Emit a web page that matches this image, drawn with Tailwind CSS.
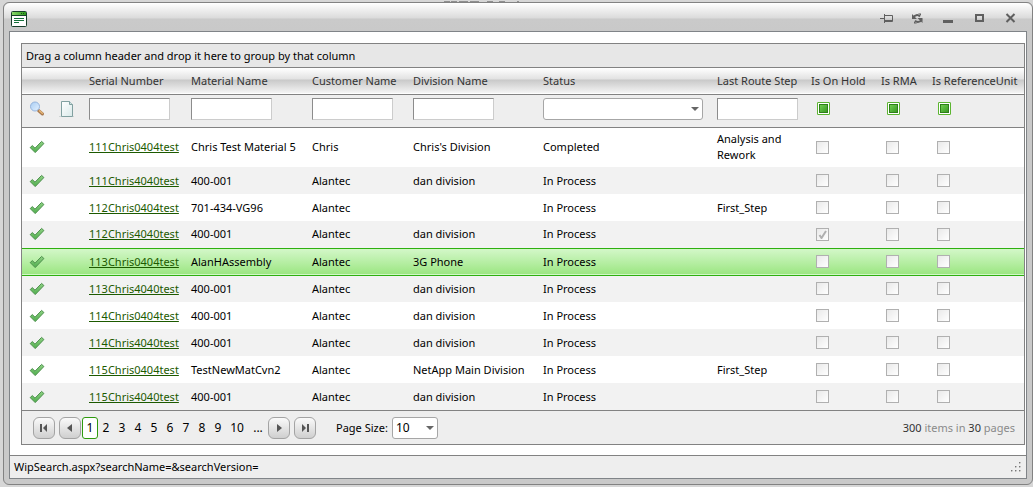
<!DOCTYPE html>
<html lang="en">
<head>
<meta charset="utf-8">
<title>WIP Search</title>
<script src="https://cdn.jsdelivr.net/npm/@tailwindcss/browser@4"></script>
</head>
<body class="flex h-screen min-h-fit flex-col bg-[#d6d6d6] pb-0.5 pl-[3px] font-['Noto_Sans','Open_Sans',sans-serif] text-[11px] leading-4 text-black">
<svg class="absolute size-0" aria-hidden="true">
  <defs>
    <linearGradient id="tickFill" x1="0" y1="0" x2="0" y2="1"><stop offset="0" stop-color="#8fd184"/><stop offset="1" stop-color="#4fae4c"/></linearGradient>
    <linearGradient id="lensFill" x1="0" y1="0" x2="1" y2="1"><stop offset="0" stop-color="#a9cdf3"/><stop offset="1" stop-color="#e3f1ff"/></linearGradient>
    <linearGradient id="pageFill" x1="0" y1="0" x2="1" y2="1"><stop offset="0" stop-color="#ffffff"/><stop offset="1" stop-color="#d9e9e9"/></linearGradient>
    <linearGradient id="barFill" x1="0" y1="0" x2="1" y2="0"><stop offset="0" stop-color="#8ad86a"/><stop offset="1" stop-color="#2c9a1c"/></linearGradient>
    <symbol id="tick" viewBox="0 0 16 16"><path d="M1.200 8.600 3.300 6.600 6 9.200 12.600 2.400 14.900 4.500 6.200 13.600Z" fill="url(#tickFill)" stroke="#4b8f4b" stroke-linejoin="round"/></symbol>
  </defs>
</svg>
<svg class="h-0.5 w-full shrink-0" aria-hidden="true"><path d="M441 1.500h6m1 0h6m2 0h9m2 0h9m8 0h6m6 0h6m12 0h2" stroke="#8f8f8f"/></svg>
<div class="flex grow flex-col rounded-md border border-[#828282] bg-[#c9c9c9] px-[5px] pb-[5px]">
  <header class="-mx-[5px] flex h-7 shrink-0 items-center justify-between rounded-t-md bg-[linear-gradient(#fff,#dcdcdc_52%,#cacaca_58%,#c9c9c9)] pt-1 pr-[14px] pl-[7px]">
    <svg class="size-4" viewBox="0 0 16 16"><rect x=".5" y=".5" width="15" height="15" rx="1" fill="#fff" stroke="#173f2a"/><path d="M1 1h14v3H1z" fill="url(#barFill)"/><path d="M1 4.500h14" stroke="#173f2a"/><path d="M10 2h1v1h-1zM12 2h1v1h-1z" fill="#14501a"/><path d="M3 7.500h10M3 9.500h10M3 11.500h5" stroke="#14703a"/></svg>
    <div class="flex items-center gap-[15px] text-[#5f5f5f]">
      <button aria-label="Pin" class="size-4"><svg class="size-4" viewBox="0 0 16 16" fill="none" stroke="currentColor"><path d="M2 7.500h4M6.500 3v9M7 4.500h7.500v6H7"/><path d="M7 9.500h7"/></svg></button>
      <button aria-label="Reload" class="size-4"><svg class="size-4" viewBox="0 0 16 16"><path d="M4.500 6.500C5.500 3.800 9 3.300 11 5.500M12.500 8.500C11.500 11.200 8 11.700 6 9.800" fill="none" stroke="currentColor" stroke-width="2"/><path d="M3 3v5h5zM13.500 12V7h-5zM9 2.500h3v2zM5 12.500h3l-3-2z" fill="currentColor"/></svg></button>
      <button aria-label="Minimize" class="size-4"><svg class="size-4" viewBox="0 0 16 16"><path d="M3 9h10v3H3z" fill="currentColor"/></svg></button>
      <button aria-label="Maximize" class="size-4"><svg class="size-4" viewBox="0 0 16 16"><path d="M5 4h7v6H5z" fill="none" stroke="currentColor" stroke-width="2"/></svg></button>
      <button aria-label="Close" class="size-4"><svg class="size-4" viewBox="0 0 16 16"><path d="m4.500 3 8 8M12.500 3l-8 8" stroke="currentColor" stroke-width="2"/></svg></button>
    </div>
  </header>
  <div class="flex grow flex-col border border-[#808488] bg-white">
    <main class="grow pt-[11px] pr-px pb-2.5 pl-[11px]">
      <div class="border border-[#828282] bg-[#eee]">
        <div class="flex h-6 items-center border-b border-[#828282] bg-[#e7e7e7] px-1">Drag a column header and drop it here to group by that column</div>
        <table class="w-full table-fixed border-collapse text-left [&_td]:px-[7px] [&_th]:px-[7px] [&_th]:font-normal">
          <colgroup><col class="w-[30px]"><col class="w-[30px]"><col class="w-[102px]"><col class="w-[121px]"><col class="w-[101px]"><col class="w-[130px]"><col><col class="w-[94px]"><col class="w-[70px]"><col class="w-[51px]"><col class="w-[99px]"></colgroup>
          <thead>
            <tr class="h-[26px] border-b border-[#828282] bg-[linear-gradient(#fff,#e2e2e2_44%,#c9c9c9_48%,#f4f4f4)] whitespace-nowrap text-[#333]"><th></th><th></th><th>Serial Number</th><th>Material Name</th><th>Customer Name</th><th>Division Name</th><th>Status</th><th>Last Route Step</th><th>Is On Hold</th><th>Is RMA</th><th>Is ReferenceUnit</th></tr>
            <tr class="h-[33px] border-b border-[#828282] [&>td]:pb-1" id="filters">
              <td><button aria-label="Search" class="block size-4"><svg class="size-4" viewBox="0 0 16 16"><path d="m9.500 9.500 4 3.500" stroke="#a8794f" stroke-width="3" stroke-linecap="round"/><path d="m10.500 9.800 2.800 2.500" stroke="#e8b878" stroke-width="1.500" stroke-linecap="round"/><circle cx="6" cy="5.500" r="4.500" fill="url(#lensFill)" stroke="#96b4dc"/></svg></button></td>
              <td><button aria-label="Clear filter" class="block size-4"><svg class="size-4" viewBox="0 0 16 16"><path d="M0 15.500h15" stroke="#cfd4d4"/><path d="M2.500.5h8l3 3v12h-11z" fill="url(#pageFill)" stroke="#81a0a0"/><path d="M10.500.5v3h3" fill="#cfe3e3" stroke="#81a0a0"/></svg></button></td>
              <td><input aria-label="Serial Number" class="block h-[22px] w-[81px] border border-t-[#8c8c8c] border-r-[#ccc] border-b-[#ccc] border-l-[#8c8c8c] bg-white px-1"></td>
              <td><input aria-label="Material Name" class="block h-[22px] w-[81px] border border-t-[#8c8c8c] border-r-[#ccc] border-b-[#ccc] border-l-[#8c8c8c] bg-white px-1"></td>
              <td><input aria-label="Customer Name" class="block h-[22px] w-[81px] border border-t-[#8c8c8c] border-r-[#ccc] border-b-[#ccc] border-l-[#8c8c8c] bg-white px-1"></td>
              <td><input aria-label="Division Name" class="block h-[22px] w-[81px] border border-t-[#8c8c8c] border-r-[#ccc] border-b-[#ccc] border-l-[#8c8c8c] bg-white px-1"></td>
              <td><div class="grid items-center"><select aria-label="Status" class="col-start-1 row-start-1 h-[22px] w-full appearance-none rounded-[3px] border border-[#a6a6a6] bg-white px-1"><option></option><option>Completed</option><option>In Process</option></select><svg class="pointer-events-none col-start-1 row-start-1 mr-1 h-1 w-2 justify-self-end" viewBox="0 0 8 4"><path d="M0 0h8L4 4z" fill="#666"/></svg></div></td>
              <td><input aria-label="Last Route Step" class="block h-[22px] w-[81px] border border-t-[#8c8c8c] border-r-[#ccc] border-b-[#ccc] border-l-[#8c8c8c] bg-white px-1"></td>
            </tr>
          </thead>
          <tbody id="rows"></tbody>
        </table>
        <div class="flex h-[34px] items-center border-t border-[#828282] pr-[9px] pl-[11px]">
          <nav class="flex items-center" aria-label="Pages">
            <button aria-label="First page" class="mr-1 grid h-[22px] w-[22px] place-items-center rounded-md border border-[#a3a3a3] bg-linear-to-b from-[#fafafa] to-[#cfcfcf]"><svg class="h-2 w-2" viewBox="0 0 8 8"><path d="M0 0h2v8H0zM7 0v8L3 4z" fill="#555"/></svg></button>
            <button aria-label="Previous page" class="mr-px grid h-[22px] w-[22px] place-items-center rounded-md border border-[#a3a3a3] bg-linear-to-b from-[#fafafa] to-[#cfcfcf]"><svg class="h-2 w-2" viewBox="0 0 8 8"><path d="M6 0v8L1 4z" fill="#555"/></svg></button>
            <a href="#1" aria-current="page" class="grid h-[22px] w-4 place-items-center rounded-[3px] border border-[#2f9a0e] bg-white text-xs">1</a>
            <a href="#2" class="w-4 text-center text-xs">2</a>
            <a href="#3" class="w-4 text-center text-xs">3</a>
            <a href="#4" class="w-4 text-center text-xs">4</a>
            <a href="#5" class="w-4 text-center text-xs">5</a>
            <a href="#6" class="w-4 text-center text-xs">6</a>
            <a href="#7" class="w-4 text-center text-xs">7</a>
            <a href="#8" class="w-4 text-center text-xs">8</a>
            <a href="#9" class="w-4 text-center text-xs">9</a>
            <a href="#10" class="w-[22px] text-center text-xs">10</a>
            <a href="#11" class="w-5 text-center text-xs">...</a>
            <button aria-label="Next page" class="mr-1 grid h-[22px] w-[22px] place-items-center rounded-md border border-[#a3a3a3] bg-linear-to-b from-[#fafafa] to-[#cfcfcf]"><svg class="h-2 w-2" viewBox="0 0 8 8"><path d="M2 0v8l5-4z" fill="#555"/></svg></button>
            <button aria-label="Last page" class="grid h-[22px] w-[22px] place-items-center rounded-md border border-[#a3a3a3] bg-linear-to-b from-[#fafafa] to-[#cfcfcf]"><svg class="h-2 w-2" viewBox="0 0 8 8"><path d="M6 0h2v8H6zM1 0v8l4-4z" fill="#555"/></svg></button>
          </nav>
          <label for="size" class="ml-5 w-14 whitespace-nowrap">Page Size:</label>
          <div class="grid items-center"><select id="size" class="col-start-1 row-start-1 h-[22px] w-[46px] appearance-none rounded-[3px] border border-[#a6a6a6] bg-white pl-[3px] text-xs"><option>10</option><option>20</option><option>50</option></select><svg class="pointer-events-none col-start-1 row-start-1 mr-1 h-1 w-2 justify-self-end" viewBox="0 0 8 4"><path d="M0 0h8L4 4z" fill="#666"/></svg></div>
          <p class="ml-auto text-[#8a8a8a]"><span class="text-[#333]">300</span> items in <span class="text-[#333]">30</span> pages</p>
        </div>
      </div>
    </main>
    <footer class="flex h-[23px] items-center justify-between border-t border-[#828282] bg-[#eee] pr-1 pl-1"><span>WipSearch.aspx?searchName=&amp;searchVersion=</span>
      <svg class="size-3" viewBox="0 0 12 12"><path d="M9 1h2v2H9zM5 5h2v2H5zM9 5h2v2H9zM1 9h2v2H1zM5 9h2v2H5zM9 9h2v2H9z" fill="#fff"/><path d="M9 1h1.500v1.500H9zM5 5h1.500v1.500H5zM9 5h1.500v1.500H9zM1 9h1.500v1.500H1zM5 9h1.500v1.500H5zM9 9h1.500v1.500H9z" fill="#777"/></svg>
    </footer>
  </div>
</div>
<script>
const FLAGS = ['Is On Hold', 'Is RMA', 'Is ReferenceUnit'];
document.getElementById('filters').insertAdjacentHTML('beforeend', FLAGS.map(f =>
  `<td><input type="checkbox" aria-label="Filter ${f}" class="ml-1.5 block size-[13px] appearance-none rounded-[1px] border border-[#5cb531] bg-[linear-gradient(135deg,#7fdc5c,#2a8a16)] shadow-[inset_0_0_0_1px_#fff,inset_0_0_0_2px_#2f7d1a]"></td>`).join(''));

const data = [
  ['111Chris0404test', 'Chris Test Material 5', 'Chris', "Chris's Division", 'Completed', 'Analysis and Rework'],
  ['111Chris4040test', '400-001', 'Alantec', 'dan division', 'In Process', ''],
  ['112Chris0404test', '701-434-VG96', 'Alantec', '', 'In Process', 'First_Step'],
  ['112Chris4040test', '400-001', 'Alantec', 'dan division', 'In Process', '', true],
  ['113Chris0404test', 'AlanHAssembly', 'Alantec', '3G Phone', 'In Process', ''],
  ['113Chris4040test', '400-001', 'Alantec', 'dan division', 'In Process', ''],
  ['114Chris0404test', '400-001', 'Alantec', 'dan division', 'In Process', ''],
  ['114Chris4040test', '400-001', 'Alantec', 'dan division', 'In Process', ''],
  ['115Chris0404test', 'TestNewMatCvn2', 'Alantec', 'NetApp Main Division', 'In Process', 'First_Step'],
  ['115Chris4040test', '400-001', 'Alantec', 'dan division', 'In Process', '']
];
const SELECTED = 4;
const box = (label, on) => `<td><span class="ml-[5px] grid size-[13px] place-items-center"><input type="checkbox" disabled ${on ? 'checked' : ''} aria-label="${label}" class="col-start-1 row-start-1 size-[13px] appearance-none border border-[#b0b0b0] bg-linear-to-br from-[#e9e9e9] to-white">${on ? '<svg class="col-start-1 row-start-1 size-[9px]" viewBox="0 0 9 9"><path d="M1.500 5 3.500 8 8 1" fill="none" stroke="#b0b0b0" stroke-width="2"/></svg>' : ''}</span></td>`;
document.getElementById('rows').innerHTML = data.map(([serial, material, customer, division, status, step, hold], i) => {
  const tone = i === SELECTED ? 'h-[27px] border-y border-[#2eb010] bg-linear-to-b from-[#d3f7c8] to-[#9ce682]'
    : i === 0 ? 'h-10 bg-white' : i % 2 ? 'h-[27px] bg-[#f2f2f2]' : 'h-[27px] bg-white';
  return `<tr class="${tone}"><td><button aria-label="Select ${serial}" class="block size-4"><svg class="size-4"><use href="#tick"/></svg></button></td><td></td>
    <td><a href="#${serial}" class="text-[#1c5a00] underline">${serial}</a></td><td class="whitespace-nowrap">${material}</td><td>${customer}</td><td class="whitespace-nowrap">${division}</td><td>${status}</td><td>${step}</td>${box(FLAGS[0], hold)}${box(FLAGS[1])}${box(FLAGS[2])}</tr>`;
}).join('');
</script>
</body>
</html>
